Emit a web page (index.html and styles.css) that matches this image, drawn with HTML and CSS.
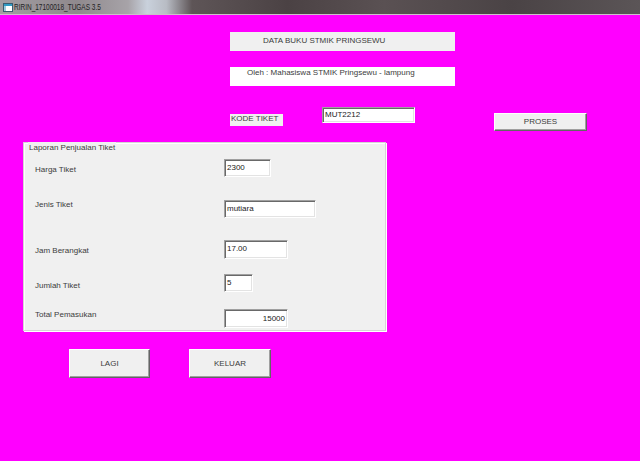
FILE: index.html
```html
<!DOCTYPE html>
<html lang="id">
<head>
  <meta charset="UTF-8" />
  <meta name="viewport" content="width=device-width, initial-scale=1.0" />
  <title>RIRIN_17100018_TUGAS 3.5</title>
  <link rel="stylesheet" href="styles.css">
</head>
<body>
  <div class="titlebar">
    <svg class="app-icon" width="10" height="9" viewBox="0 0 10 9">
      <rect x="0.5" y="0.5" width="9" height="8" fill="#ffffff" stroke="#3a5a70" />
      <rect x="1" y="1" width="8" height="2" fill="#2f9bc4" />
      <rect x="1" y="3" width="2" height="5" fill="#9cc9dc" />
    </svg>
    <span class="title-text">RIRIN_17100018_TUGAS 3.5</span>
  </div>

  <div class="form">
    <div class="header">
      <div class="label title-label">DATA BUKU STMIK PRINGSEWU</div>
      <div class="label author-label">Oleh : Mahasiswa STMIK Pringsewu - lampung</div>
    </div>

    <div class="kode-row">
      <div class="label kode-label">KODE TIKET</div>
      <div class="textbox kode-box">MUT2212</div>
      <div class="button proses">PROSES</div>
    </div>

    <div class="frame">
      <div class="frame-caption">Laporan Penjualan Tiket</div>
      <div class="field-list">
        <div class="field row-harga">
          <span class="field-label">Harga Tiket</span>
          <div class="textbox box-harga">2300</div>
        </div>
        <div class="field row-jenis">
          <span class="field-label">Jenis Tiket</span>
          <div class="textbox box-jenis">mutiara</div>
        </div>
        <div class="field row-jam">
          <span class="field-label">Jam Berangkat</span>
          <div class="textbox box-jam">17.00</div>
        </div>
        <div class="field row-jumlah">
          <span class="field-label">Jumlah Tiket</span>
          <div class="textbox box-jumlah">5</div>
        </div>
        <div class="field row-total">
          <span class="field-label">Total Pemasukan</span>
          <div class="textbox box-total">15000</div>
        </div>
      </div>
    </div>

    <div class="button-row">
      <div class="button big lagi">LAGI</div>
      <div class="button big keluar">KELUAR</div>
    </div>
  </div>
</body>
</html>
```

FILE: styles.css
```css
body {
  margin: 0;
  background-color: #ff00ff;
  font-family: "Liberation Sans", Arial, sans-serif;
  font-size: 8px;
  line-height: 10px;
  color: #3c3c3c;
  overflow: hidden;
}
.titlebar {
  height: 14px;
  border-bottom: 1px solid #cdbfca;
  display: flex;
  align-items: center;
  background: linear-gradient(to right, #a29da1 0%, #8f898d 12%, #a7a3a8 20%, #c9d1dc 23%, #b8bcc4 26%, #5e5557 30%, #4b4244 45%, #5a5153 60%, #4a4345 80%, #5b5557 100%);
}
.app-icon {
  margin-left: 3px;
}
.title-text {
  margin-left: 1px;
  font-size: 9px;
  color: #1f1f24;
  transform: scaleX(0.72);
  transform-origin: left center;
}

/* header labels */
.header {
  margin-left: 230px;
}
.label {
  box-sizing: border-box;
  background-color: #f0f0f0;
}
.title-label {
  margin-top: 17px;
  width: 225px;
  height: 19px;
  padding: 4px 0 0 33px;
}
.author-label {
  margin-top: 16px;
  width: 225px;
  height: 19px;
  padding: 1px 0 0 17px;
  background-color: #ffffff;
}

/* kode tiket row */
.kode-row {
  display: flex;
  align-items: flex-start;
  margin-top: 21px;
  padding-left: 230px;
}
.kode-label {
  margin-top: 7px;
  width: 53px;
  height: 12px;
  line-height: 8px;
  padding: 1px 0 0 1px;
}
.textbox {
  box-sizing: border-box;
  background-color: #ffffff;
  border: 1px solid;
  border-color: #a0a0a0 #ffffff #ffffff #a0a0a0;
  box-shadow: inset 1px 1px #696969, inset -1px -1px #e3e3e3;
  padding: 3px 2px 0 2px;
  height: 18px;
  color: #222;
}
.kode-box {
  margin-left: 39px;
  width: 93px;
  height: 16px;
  padding-top: 2px;
}
.button {
  box-sizing: border-box;
  background-color: #f0f0f0;
  border: 1px solid;
  border-color: #ffffff #646464 #646464 #ffffff;
  box-shadow: inset -1px -1px #a0a0a0;
  text-align: center;
}
.proses {
  margin-left: 79px;
  margin-top: 6px;
  width: 93px;
  height: 18px;
  line-height: 15px;
}

/* frame */
.frame {
  box-sizing: border-box;
  margin: 11px 0 0 23px;
  width: 363px;
  height: 189px;
  background-color: #f0f0f0;
  border: 1px solid #d5d5d5;
  box-shadow: inset 1px 1px #ffffff, 1px 1px #ffffff;
}
.frame-caption {
  width: fit-content;
  height: 12px;
  line-height: 12px;
  margin: -1px 0 0 4px;
  padding: 0 1px;
  background-color: #f0f0f0;
}
.field-list {
  margin-top: 5px;
}
.field {
  display: grid;
  grid-template-columns: 200px auto;
  align-items: start;
}
.field-label {
  padding-left: 11px;
}
.field .textbox {
  justify-self: start;
}
.row-harga { height: 41px; }
.row-harga .field-label { margin-top: 6px; }
.row-jenis { height: 40px; }
.row-jenis .field-label { margin-top: 0; }
.row-jam { height: 34px; }
.row-jam .field-label { margin-top: 6px; }
.row-jumlah { height: 35px; }
.row-jumlah .field-label { margin-top: 7px; }
.row-total .field-label { margin-top: 1px; }
.box-harga { width: 47px; }
.box-jenis { width: 92px; }
.box-jam { width: 64px; height: 19px; }
.box-jumlah { width: 29px; }
.box-total {
  width: 64px;
  height: 19px;
  text-align: right;
  padding-top: 4px;
}

/* bottom buttons */
.button-row {
  display: flex;
  margin-top: 18px;
  padding-left: 69px;
}
.big {
  width: 81px;
  height: 29px;
  line-height: 27px;
}
.keluar {
  margin-left: 39px;
  width: 82px;
}
```
